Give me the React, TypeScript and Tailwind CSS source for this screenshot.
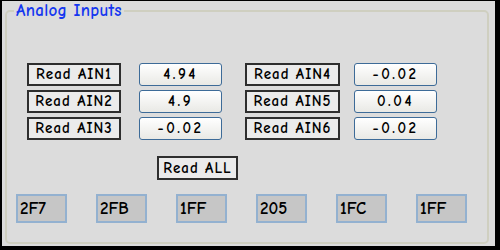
import React from 'react';

const font = "font-['Comic_Sans_MS','Comic_Neue','DejaVu_Sans',sans-serif]";

const rows = [
  { left: 'Read AIN1', leftVal: '4.94', right: 'Read AIN4', rightVal: '-0.02' },
  { left: 'Read AIN2', leftVal: '4.9', right: 'Read AIN5', rightVal: '0.04' },
  { left: 'Read AIN3', leftVal: '-0.02', right: 'Read AIN6', rightVal: '-0.02' },
];

const raw = ['2F7', '2FB', '1FF', '205', '1FC', '1FF'];

const ReadButton: React.FC<{ label: string; className?: string }> = ({ label, className }) => (
  <button
    type="button"
    className={`flex h-full items-center justify-center border-2 border-[#2e2e2e] bg-[#ebebeb] text-[15px] font-bold tracking-[1px] whitespace-nowrap text-black ${className ?? ''}`}
  >
    {label}
  </button>
);

const ValueBox: React.FC<{ value: string; className?: string }> = ({ value, className }) => (
  <div
    className={`flex h-full w-[83px] items-center justify-center rounded-[3px] border-[1.5px] border-[#3d6b98] bg-linear-to-b from-white to-[#e9e9e5] text-[15px] font-bold tracking-[2.5px] text-black ${className ?? ''}`}
  >
    {value}
  </div>
);

const App: React.FC = () => {
  return (
    <div
      className={`h-[250px] w-[500px] border-t border-r-[5px] border-b-4 border-l-2 border-black bg-[#dcdcdc] ${font}`}
    >
      <fieldset className="ml-[3px] h-[243px] w-[484px] rounded-[5px] border-2 border-[#cfcfc0]">
        <legend className="ml-[7px] px-[2px] text-[17px] leading-[20px] font-bold tracking-[0.3px] text-[#1437f0]">
          Analog Inputs
        </legend>

        <div className="flex flex-col pt-[42px] pl-[20px]">
          <div className="flex flex-col gap-[4px]">
            {rows.map((r) => (
              <div key={r.left} className="flex h-[23px] items-center">
                <ReadButton label={r.left} className="w-[94px]" />
                <ValueBox value={r.leftVal} className="ml-[18px]" />
                <ReadButton label={r.right} className="ml-[23px] w-[95px]" />
                <ValueBox value={r.rightVal} className="ml-[14px]" />
              </div>
            ))}
          </div>

          <div className="mt-[16px] h-[24px] pl-[130px]">
            <ReadButton label="Read ALL" className="w-[81px]" />
          </div>

          <div className="mt-[14px] -ml-[11px] flex gap-[29px]">
            {raw.map((v, i) => (
              <div
                key={i}
                className="flex h-[29px] w-[51px] items-center border-2 border-[#93b1d0] bg-[#c6c6c6] pl-[2px] text-[17px] font-bold text-black"
              >
                {v}
              </div>
            ))}
          </div>
        </div>
      </fieldset>
    </div>
  );
};

export default App;
